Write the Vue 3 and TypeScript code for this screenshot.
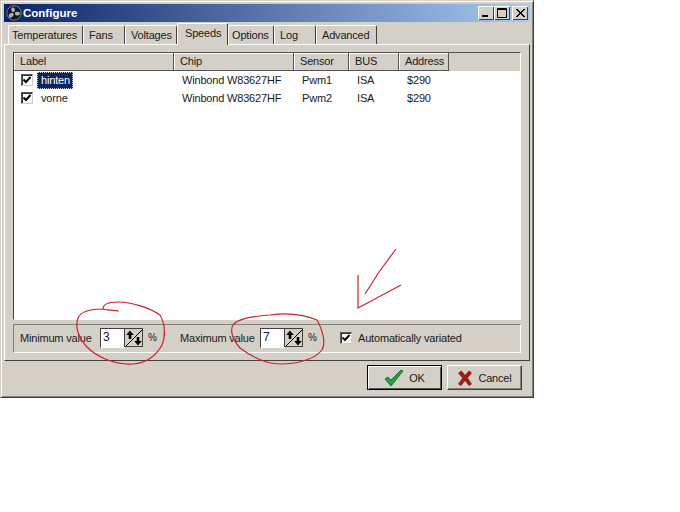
<script setup lang="ts">
const tabs = [
  { name: 'Temperatures', w: 75, pad: 3 },
  { name: 'Fans', w: 42, pad: 5 },
  { name: 'Voltages', w: 52, pad: 5 },
  { name: 'Speeds', w: 51, pad: 7, active: true },
  { name: 'Options', w: 46, pad: 3 },
  { name: 'Log', w: 42, pad: 5 },
  { name: 'Advanced', w: 61, pad: 5 },
]
const cols = [
  { name: 'Label', w: 160 },
  { name: 'Chip', w: 120 },
  { name: 'Sensor', w: 55 },
  { name: 'BUS', w: 50 },
  { name: 'Address', w: 50 },
]
const rows = [
  { label: 'hinten', chip: 'Winbond W83627HF', sensor: 'Pwm1', bus: 'ISA', addr: '$290', sel: true },
  { label: 'vorne', chip: 'Winbond W83627HF', sensor: 'Pwm2', bus: 'ISA', addr: '$290', sel: false },
]
const spins = [
  { label: 'Minimum value', value: '3', labelW: 80 },
  { label: 'Maximum value', value: '7', labelW: 80 },
]
</script>

<template>
  <div class="stage">
    <div class="window">
      <div class="titlebar">
        <svg class="appicon" width="16" height="16" viewBox="0 0 16 16">
          <circle cx="8" cy="8" r="7.2" fill="#15171f" stroke="#777c8c" stroke-width="1" />
          <path d="M8 8C5 7 4.500 3 6.500 2.500C9 2 9.500 5 8 8zM8 8c2.500-2 6-1.500 6 .5S10 12 8 8zM8 8c0 3-2.500 5.500-4.500 4.500S3.500 7 8 8z" fill="#aab0bc" />
          <circle cx="8" cy="8" r="1.200" fill="#15171f" />
        </svg>
        <span class="title">Configure</span>
        <div class="caps">
          <span class="cap"><svg width="16" height="14" viewBox="0 0 16 14"><rect x="4" y="9" width="6" height="2" fill="#000" /></svg></span>
          <span class="cap"><svg width="16" height="14" viewBox="0 0 16 14"><path d="M3.500 2.500h9v9h-9zM3 3.500h10" fill="none" stroke="#000" /></svg></span>
          <span class="cap close"><svg width="16" height="14" viewBox="0 0 16 14"><path d="M4 3l8 8M5 3l8 8M12 3l-8 8M13 3l-8 8" stroke="#000" fill="none" /></svg></span>
        </div>
      </div>

      <div class="tabs">
        <div v-for="t in tabs" :key="t.name" class="tab" :class="{ active: t.active }" :style="{ width: t.w + 'px', paddingLeft: t.pad + 'px' }">{{ t.name }}</div>
      </div>

      <div class="page">
        <div class="list">
          <div class="header">
            <div v-for="c in cols" :key="c.name" class="hcell" :style="{ width: c.w + 'px' }">{{ c.name }}</div>
          </div>
          <div v-for="r in rows" :key="r.label" class="row">
            <div class="cell first" :style="{ width: cols[0].w + 'px' }">
              <span class="check small">
                <svg width="10" height="10" viewBox="0 0 10 10"><path d="M1.500 4.500l2.500 2.500 4.500-5" fill="none" stroke="#000" stroke-width="2" /></svg>
              </span>
              <span class="lbl" :class="{ sel: r.sel }">{{ r.label }}</span>
            </div>
            <div class="cell" :style="{ width: cols[1].w + 'px' }">{{ r.chip }}</div>
            <div class="cell" :style="{ width: cols[2].w + 'px' }">{{ r.sensor }}</div>
            <div class="cell" :style="{ width: cols[3].w + 'px' }">{{ r.bus }}</div>
            <div class="cell" :style="{ width: cols[4].w + 'px' }">{{ r.addr }}</div>
          </div>
        </div>

        <div class="panel">
          <div v-for="s in spins" :key="s.label" class="spin-group">
            <span class="spin-label" :style="{ width: s.labelW + 'px' }">{{ s.label }}</span>
            <span class="edit">{{ s.value }}</span>
            <span class="spin">
              <svg width="18" height="18" viewBox="0 0 18 18">
                <path d="M0 18L18 0" stroke="#000" />
                <path d="M5 1.500L1.200 6H3.700v4h2.600V6h2.500zM13 16.500l3.800-4.500H14.300V8h-2.600v4H9.200z" fill="#000" />
              </svg>
            </span>
            <span class="pct">%</span>
          </div>
          <span class="check big">
            <svg width="10" height="10" viewBox="0 0 10 10"><path d="M1.500 4.500l2.500 2.500 4.500-5" fill="none" stroke="#000" stroke-width="2" /></svg>
          </span>
          <span class="auto">Automatically variated</span>
        </div>
      </div>

      <div class="footer">
        <button class="btn default">
          <svg width="20" height="18" viewBox="0 0 20 18">
            <path d="M1 10l3-2 3 3 10-10 2 1L7 17z" fill="#22a53f" stroke="#0c5a20" stroke-width="0.8" />
          </svg>
          <span>OK</span>
        </button>
        <button class="btn">
          <svg width="16" height="16" viewBox="0 0 16 16">
            <path d="M1 3l3.500-2.500L8 5l4-4.500 3 2.500-4.200 5 4.200 6-3 2-4-5-4 5-3-2 4.300-6z" fill="#9c1b1b" />
          </svg>
          <span>Cancel</span>
        </button>
      </div>
    </div>

    <svg class="ink" width="680" height="512" viewBox="0 0 680 512" fill="none" stroke="#d0202e" stroke-width="1.200">
      <path d="M119 311C112 310 106 310 103 309C103 304 108 302 118 302C132 302 150 308 160 315C166 325 165 338 162 345C156 356 146 363 133 364C113 365 96 356 87 347C78 337 75 327 78 318C81 311 92 309 103 309" />
      <path d="M270 315C284 313 302 314 317 320C323 331 326 343 322 350C314 360 296 364 280 364C262 364 248 354 240 348C232 339 230 330 233 325C238 318 256 316 270 315" />
      <path d="M396 249L379 272L365 294M358 275L358 308L401 285" />
    </svg>
  </div>
</template>

<style>
html, body { margin: 0; background: #fff; }
</style>

<style scoped>
.stage {
  position: relative;
  width: 680px;
  height: 512px;
  background: #fff;
  overflow: hidden;
  font-family: "Liberation Sans", Arial, sans-serif;
  font-size: 11px;
  letter-spacing: -0.18px;
  color: #1a1a1a;
}
.window {
  box-sizing: border-box;
  width: 534px;
  height: 398px;
  background: #d4d0c8;
  border: 1px solid;
  border-color: #d4d0c8 #404040 #404040 #d4d0c8;
  box-shadow: inset 1px 1px 0 #fff, inset -1px -1px 0 #808080;
  padding: 3px;
  display: flex;
  flex-direction: column;
}
.titlebar {
  height: 18px;
  flex: none;
  display: flex;
  align-items: center;
  padding: 0 2px;
  background: linear-gradient(90deg, #0a246a, #a6caf0);
  color: #fff;
}
.appicon { flex: none; }
.title { margin-left: 1px; font-weight: bold; font-size: 11.5px; letter-spacing: 0; }
.caps { margin-left: auto; display: flex; align-items: center; }
.cap {
  box-sizing: border-box;
  width: 16px;
  height: 14px;
  background: #d4d0c8;
  box-shadow: inset 1px 1px 0 #fff, inset -1px -1px 0 #404040;
  display: block;
}
.cap svg { display: block; }
.close { margin-left: 2px; }
.tabs {
  height: 22px;
  flex: none;
  display: flex;
  align-items: flex-end;
  padding-left: 4px;
  position: relative;
  z-index: 1;
}
.tab {
  box-sizing: border-box;
  height: 19px;
  line-height: 18px;
  border-top: 1px solid #fff;
  border-left: 1px solid #fff;
  border-right: 1px solid #404040;
  border-radius: 2px 2px 0 0;
  white-space: nowrap;
}
.tab.active {
  height: 22px;
  line-height: 18px;
  background: #d4d0c8;
  margin-bottom: -1px;
}
.page {
  box-sizing: border-box;
  width: 526px;
  height: 317px;
  flex: none;
  border: 1px solid;
  border-color: #fff #404040 #404040 #fff;
  padding: 7px 8px;
  display: flex;
  flex-direction: column;
  gap: 4px;
}
.list {
  flex: 1;
  background: #fff;
  border: 1px solid;
  border-color: #505050 #fff #fff #404040;
  overflow: hidden;
}
.header { display: flex; height: 18px; background: #d4d0c8; }
.hcell {
  box-sizing: border-box;
  height: 18px;
  line-height: 17px;
  padding-left: 6px;
  flex: none;
  border-right: 1px solid #555;
  border-bottom: 1px solid #555;
  box-shadow: inset 1px 1px 0 #fff;
}
.row { display: flex; height: 18px; align-items: center; }
.cell { flex: none; box-sizing: border-box; padding-left: 8px; white-space: nowrap; }
.first { display: flex; align-items: center; padding-left: 7px; }
.check {
  box-sizing: border-box;
  flex: none;
  display: flex;
  align-items: center;
  justify-content: center;
  background: #fff;
  border: 1px solid;
  border-color: #555 #ccc #ccc #555;
  box-shadow: inset 1px 1px 0 #333;
}
.check.small { width: 12px; height: 12px; }
.check.big { width: 12px; height: 12px; }
.lbl { margin-left: 4px; padding: 0 3px 0 4px; line-height: 17px; }
.lbl.sel { background: #0a246a; color: #fff; outline: 1px dotted #d4d0c8; outline-offset: -1px; }
.panel {
  box-sizing: border-box;
  height: 29px;
  flex: none;
  display: flex;
  align-items: center;
  padding: 0 0 2px 6px;
  border: 1px solid;
  border-color: #808080 #fff #fff #808080;
}
.spin-group { display: flex; align-items: center; width: 160px; }
.spin-label { flex: none; white-space: nowrap; }
.edit {
  box-sizing: border-box;
  width: 25px;
  height: 20px;
  line-height: 17px;
  padding-left: 2px;
  background: #fff;
  border: 1px solid;
  border-color: #404040 #fff #fff #404040;
  font-size: 12px;
}
.spin {
  box-sizing: border-box;
  width: 19px;
  height: 19px;
  background: #d4d0c8;
  border: 1px solid #404040;
  overflow: hidden;
  display: block;
  margin-left: -1px;
}
.spin svg { display: block; }
.pct { margin-left: 5px; font-size: 10px; }
.auto { margin-left: 6px; white-space: nowrap; }
.footer {
  flex: 1;
  display: flex;
  justify-content: flex-end;
  gap: 5px;
  padding: 4px 8px 0 0;
  align-items: flex-start;
}
.btn {
  box-sizing: border-box;
  width: 75px;
  height: 25px;
  padding: 0;
  background: #d4d0c8;
  border: 1px solid;
  border-color: #fff #404040 #404040 #fff;
  box-shadow: inset -1px -1px 0 #808080;
  display: flex;
  align-items: center;
  justify-content: center;
  gap: 5px;
  font: inherit;
  letter-spacing: inherit;
  color: inherit;
}
.btn.default {
  border: 1px solid #000;
  box-shadow: inset 1px 1px 0 #fff, inset -1px -1px 0 #555;
}
.ink { position: absolute; left: 0; top: 0; pointer-events: none; }
</style>
